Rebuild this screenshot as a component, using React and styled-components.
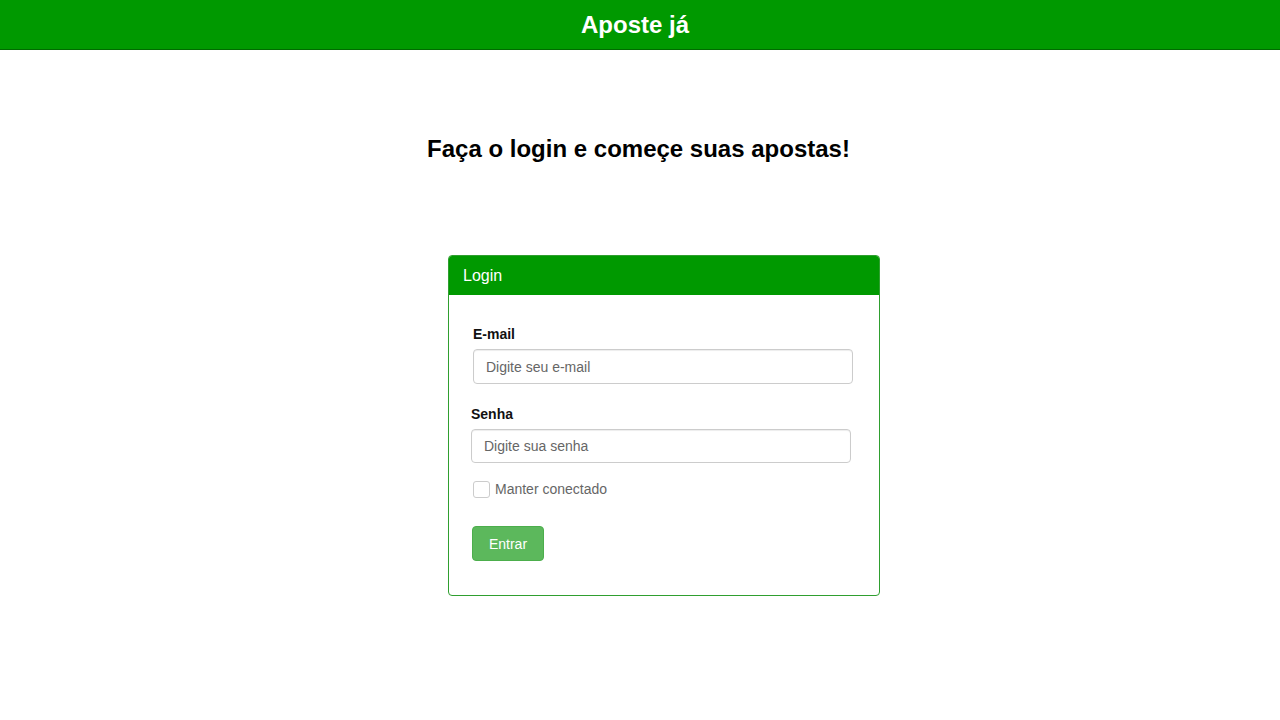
import React from "react"
import styled, {createGlobalStyle} from "styled-components"

const GlobalStyle = createGlobalStyle`
  body {
    margin: 0;
    background: #fff;
    font-family: "Liberation Sans", Arial, sans-serif;
    color: #000;
  }
`

const Navbar = styled.header`
  height: 49px;
  background-color: #009900;
  border-bottom: 1px solid #006b00;
  display: flex;
  align-items: center;
  justify-content: center;
`

const Brand = styled.h1`
  margin: 0 10px 0 0;
  color: #fff;
  font-size: 24px;
  font-weight: bold;
  line-height: 1;
`

const Main = styled.main`
  display: flex;
  flex-direction: column;
`

const Headline = styled.h2`
  margin: 86px 0 0;
  text-align: center;
  font-size: 24px;
  font-weight: bold;
  line-height: 26px;
  padding-right: 3px;
`

const Panel = styled.section`
  margin: 93px 0 0 448px;
  width: 432px;
  box-sizing: border-box;
  border: 1px solid #2f9f2f;
  border-radius: 4px;
  overflow: hidden;
`

const PanelHeading = styled.div`
  height: 39px;
  box-sizing: border-box;
  padding: 0 14px;
  display: flex;
  align-items: center;
  background-color: #009900;
  color: #fff;
  font-size: 16px;
`

const PanelBody = styled.form`
  padding: 29px 26px 34px 22px;
  display: flex;
  flex-direction: column;
`

const FormGroup = styled.div`
  display: flex;
  flex-direction: column;
  margin-left: ${p => p.$shift || 0}px;
  margin-bottom: ${p => p.$gap || 0}px;
`

const Label = styled.label`
  font-size: 14px;
  font-weight: bold;
  line-height: 20px;
  margin-bottom: 5px;
  color: #111;
`

const Input = styled.input`
  width: 380px;
  height: ${p => p.$h || 34}px;
  box-sizing: border-box;
  padding: 0 12px;
  border: 1px solid #ccc;
  border-radius: 4px;
  box-shadow: inset 0 1px 1px rgba(0, 0, 0, 0.075);
  font-family: "Liberation Sans", Arial, sans-serif;
  font-size: 14px;
  color: #555;
  outline: none;

  &::placeholder {
    color: #666;
  }
`

const CheckRow = styled.label`
  display: flex;
  align-items: center;
  gap: 5px;
  height: 20px;
  margin: 16px 0 27px 2px;
  font-size: 14px;
  color: #666;
`

const Check = styled.input`
  appearance: none;
  margin: 0;
  width: 17px;
  height: 17px;
  box-sizing: border-box;
  border: 1px solid #ccc;
  border-radius: 3px;
  background: #fff;
`

const Button = styled.button`
  align-self: flex-start;
  margin-left: 1px;
  height: 35px;
  width: 72px;
  background-color: #5cb85c;
  border: 1px solid #4cae4c;
  border-radius: 4px;
  color: #fff;
  font-family: "Liberation Sans", Arial, sans-serif;
  font-size: 14px;
`

const App = () => {
    return (
        <>
            <GlobalStyle/>
            <Navbar>
                <Brand>Aposte já</Brand>
            </Navbar>
            <Main>
                <Headline>Faça o login e começe suas apostas!</Headline>
                <Panel>
                    <PanelHeading>Login</PanelHeading>
                    <PanelBody onSubmit={e => e.preventDefault()}>
                        <FormGroup $shift={2} $gap={20}>
                            <Label htmlFor="email">E-mail</Label>
                            <Input id="email" type="email" placeholder="Digite seu e-mail" $h={35}/>
                        </FormGroup>
                        <FormGroup>
                            <Label htmlFor="senha">Senha</Label>
                            <Input id="senha" type="password" placeholder="Digite sua senha"/>
                        </FormGroup>
                        <CheckRow>
                            <Check type="checkbox"/>
                            Manter conectado
                        </CheckRow>
                        <Button type="submit">Entrar</Button>
                    </PanelBody>
                </Panel>
            </Main>
        </>
    )
}

export default App
